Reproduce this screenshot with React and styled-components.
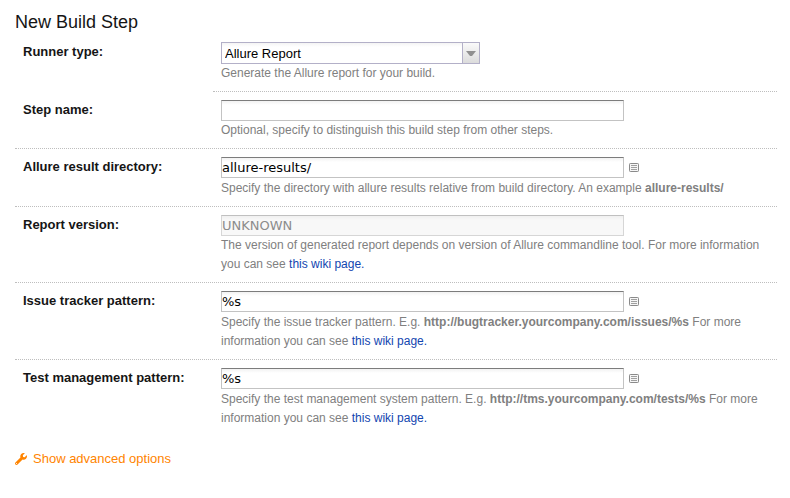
import React from "react";
import styled, { createGlobalStyle } from "styled-components";
import { FaWrench } from "react-icons/fa";

const GlobalStyle = createGlobalStyle`
  body {
    margin: 0;
    background: #fff;
    color: #151515;
    font-family: "Liberation Sans", Helvetica, Arial, sans-serif;
    font-size: 13px;
  }
  *, *::before, *::after { box-sizing: border-box; }
`;

const Page = styled.main`
  padding: 11px 13px 16px 15px;
`;

const Title = styled.h1`
  margin: 0;
  font-size: 18px;
  font-weight: 400;
  line-height: 23px;
`;

const Row = styled.div`
  display: grid;
  grid-template-columns: 198px minmax(0, 1fr);
  border-bottom: ${(p) => (p.$line === "full" ? "1px dotted #bebebe" : "none")};
`;

const Label = styled.label`
  padding: 8px;
  font-weight: 700;
  line-height: 19px;
`;

const Field = styled.div`
  padding: 8px;
  border-bottom: ${(p) => (p.$line === "field" ? "1px dotted #bebebe" : "none")};
`;

const Control = styled.div`
  display: flex;
  align-items: flex-start;
  gap: 5px;
  height: ${(p) => (p.$tall ? "22px" : "21px")};
`;

const TextInput = styled.input`
  width: 403px;
  height: 21px;
  padding: 0;
  border: 1px solid #c3c3c3;
  border-top-color: #7c7c7c;
  border-radius: 0;
  background: linear-gradient(#f2f2f2, #fff 4px);
  color: #000;
  font-family: Verdana, "DejaVu Sans", sans-serif;
  font-size: 13px;

  &:disabled {
    border-color: #d6d6d6;
    border-top-color: #c0c0c0;
    background: linear-gradient(#f0f0f0, #f8f8f8 4px);
    color: #8c8c8c;
  }
`;

const SelectBox = styled.div`
  position: relative;
  width: 259px;
`;

const Select = styled.select`
  appearance: none;
  width: 100%;
  height: 22px;
  padding: 0 20px 0 3px;
  border: 1px solid #b3b0c8;
  border-radius: 0;
  background: linear-gradient(#f4f4f4, #fff 4px);
  color: #000;
  font-family: inherit;
  font-size: 13px;
`;

const SelectArrow = styled.span`
  position: absolute;
  inset: 1px 1px 1px auto;
  display: flex;
  align-items: center;
  justify-content: center;
  width: 17px;
  border-left: 1px solid #b3b0c8;
  background: linear-gradient(#fafafa, #dcdcdc);
  pointer-events: none;
`;

const IconButton = styled.button`
  display: flex;
  margin: 6px 0 0;
  padding: 0;
  border: 0;
  background: none;
  cursor: pointer;
`;

const Help = styled.p`
  margin: 0;
  color: #808080;
  font-size: 12px;
  line-height: 19px;
`;

const WikiLink = styled.a`
  color: #1246b0;
  text-decoration: none;
`;

const AdvancedLink = styled.a`
  display: inline-flex;
  align-items: center;
  gap: 6px;
  margin-top: 13px;
  color: #ff8400;
  line-height: 19px;
  text-decoration: none;
`;

function ListIcon() {
  return (
    <svg width="10" height="9" viewBox="0 0 10 9" aria-hidden="true">
      <rect x=".5" y=".5" width="9" height="8" rx=".8" fill="#f6f6f6" stroke="#8a8a8a" />
      <path d="M2 2.500h6M2 4.500h6M2 6.500h6" stroke="#a0a0a0" />
    </svg>
  );
}

function FormRow({ id, label, line, tall, control, children }) {
  return (
    <Row $line={line}>
      <Label htmlFor={id}>{label}</Label>
      <Field $line={line}>
        <Control $tall={tall}>{control}</Control>
        <Help>{children}</Help>
      </Field>
    </Row>
  );
}

function ParameterInput({ id, value }) {
  return (
    <>
      <TextInput id={id} type="text" defaultValue={value} />
      <IconButton type="button" aria-label="Insert parameter">
        <ListIcon />
      </IconButton>
    </>
  );
}

export default function App() {
  return (
    <Page>
      <GlobalStyle />
      <Title>New Build Step</Title>
      <form>
        <FormRow
          id="runner"
          label="Runner type:"
          line="field"
          tall
          control={
            <SelectBox>
              <Select id="runner">
                <option>Allure Report</option>
              </Select>
              <SelectArrow>
                <svg width="10" height="5" viewBox="0 0 10 5" aria-hidden="true">
                  <path d="M0 0h10L6 5H4z" fill="#909090" />
                </svg>
              </SelectArrow>
            </SelectBox>
          }
        >
          Generate the Allure report for your build.
        </FormRow>
        <FormRow
          id="name"
          label="Step name:"
          line="full"
          control={<TextInput id="name" type="text" />}
        >
          Optional, specify to distinguish this build step from other steps.
        </FormRow>
        <FormRow
          id="directory"
          label="Allure result directory:"
          line="full"
          tall
          control={<ParameterInput id="directory" value="allure-results/" />}
        >
          Specify the directory with allure results relative from build directory. An example{" "}
          <b>allure-results/</b>
        </FormRow>
        <FormRow
          id="version"
          label="Report version:"
          line="full"
          control={<TextInput id="version" type="text" defaultValue="UNKNOWN" disabled />}
        >
          The version of generated report depends on version of Allure commandline tool. For more
          information you can see <WikiLink href="#wiki">this wiki page.</WikiLink>
        </FormRow>
        <FormRow
          id="issues"
          label="Issue tracker pattern:"
          line="full"
          tall
          control={<ParameterInput id="issues" value="%s" />}
        >
          Specify the issue tracker pattern. E.g. <b>http://bugtracker.yourcompany.com/issues/%s</b>{" "}
          For more information you can see <WikiLink href="#wiki">this wiki page.</WikiLink>
        </FormRow>
        <FormRow
          id="tests"
          label="Test management pattern:"
          line="none"
          tall
          control={<ParameterInput id="tests" value="%s" />}
        >
          Specify the test management system pattern. E.g.{" "}
          <b>http://tms.yourcompany.com/tests/%s</b> For more information you can see{" "}
          <WikiLink href="#wiki">this wiki page.</WikiLink>
        </FormRow>
        <AdvancedLink href="#advanced">
          <FaWrench size={12} aria-hidden="true" />
          Show advanced options
        </AdvancedLink>
      </form>
    </Page>
  );
}
